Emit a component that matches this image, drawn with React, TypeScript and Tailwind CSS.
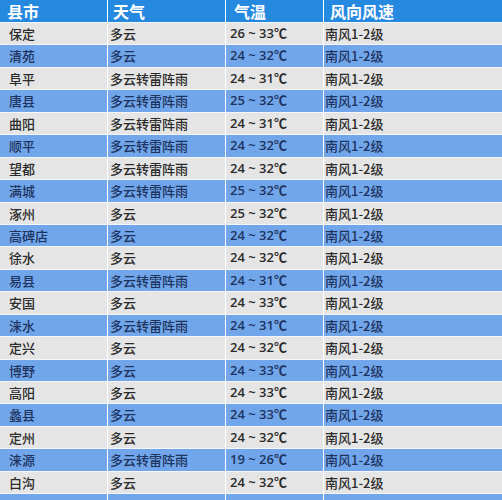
const rows: [string, string, string][] = [
    ["保定", "多云", "26 ~ 33℃"],
    ["清苑", "多云", "24 ~ 32℃"],
    ["阜平", "多云转雷阵雨", "24 ~ 31℃"],
    ["唐县", "多云转雷阵雨", "25 ~ 32℃"],
    ["曲阳", "多云转雷阵雨", "24 ~ 31℃"],
    ["顺平", "多云转雷阵雨", "24 ~ 32℃"],
    ["望都", "多云转雷阵雨", "24 ~ 32℃"],
    ["满城", "多云转雷阵雨", "25 ~ 32℃"],
    ["涿州", "多云", "25 ~ 32℃"],
    ["高碑店", "多云", "24 ~ 32℃"],
    ["徐水", "多云", "24 ~ 32℃"],
    ["易县", "多云转雷阵雨", "24 ~ 31℃"],
    ["安国", "多云", "24 ~ 33℃"],
    ["涞水", "多云转雷阵雨", "24 ~ 31℃"],
    ["定兴", "多云", "24 ~ 32℃"],
    ["博野", "多云", "24 ~ 33℃"],
    ["高阳", "多云", "24 ~ 33℃"],
    ["蠡县", "多云", "24 ~ 33℃"],
    ["定州", "多云", "24 ~ 32℃"],
    ["涞源", "多云转雷阵雨", "19 ~ 26℃"],
    ["白沟", "多云", "24 ~ 32℃"],
];

const cols = "grid grid-cols-[107px_117px_97px_1fr] gap-x-px";
const headPad = ["pl-[7px]", "pl-[5px]", "pl-[8px]", "pl-[6px]"];

export default function App() {
    return (
        <div
            className="w-[502px] h-[500px] overflow-hidden bg-white"
            style={{ fontFamily: '"Noto Sans CJK SC", "Noto Sans", sans-serif' }}
        >
            <div className={`${cols} h-[22px] bg-white`}>
                {["县市", "天气", "气温", "风向风速"].map((h, i) => (
                    <div key={h} className={`bg-[#2589e0] text-white text-[16px] font-bold leading-[22px] ${headPad[i]}`}>
                        {h}
                    </div>
                ))}
            </div>

            {[...rows, ["", "", ""] as [string, string, string]].map(([city, weather, temp], i) => {
                const blue = i % 2 === 1;
                const cell = blue ? "bg-[#72a6ea] text-[#1d3461]" : "bg-[#e5e5e5] text-[#2b2b2b]";
                return (
                    <div key={i} className={`${cols} h-[22.45px] border-t border-[#f4f6fa] text-[13px] leading-[21px]`}>
                        <div className={`${cell} pl-[9px] font-medium`}>{city}</div>
                        <div className={`${cell} pl-[2px] font-medium`}>{weather}</div>
                        <div className={`${cell} pl-[4px] font-semibold`} style={{ fontFamily: '"Open Sans", "Noto Sans CJK SC", sans-serif' }}>{temp}</div>
                        <div className={`${cell} pl-[1px] font-medium`}>{city ? "南风1-2级" : ""}</div>
                    </div>
                );
            })}
        </div>
    );
}
